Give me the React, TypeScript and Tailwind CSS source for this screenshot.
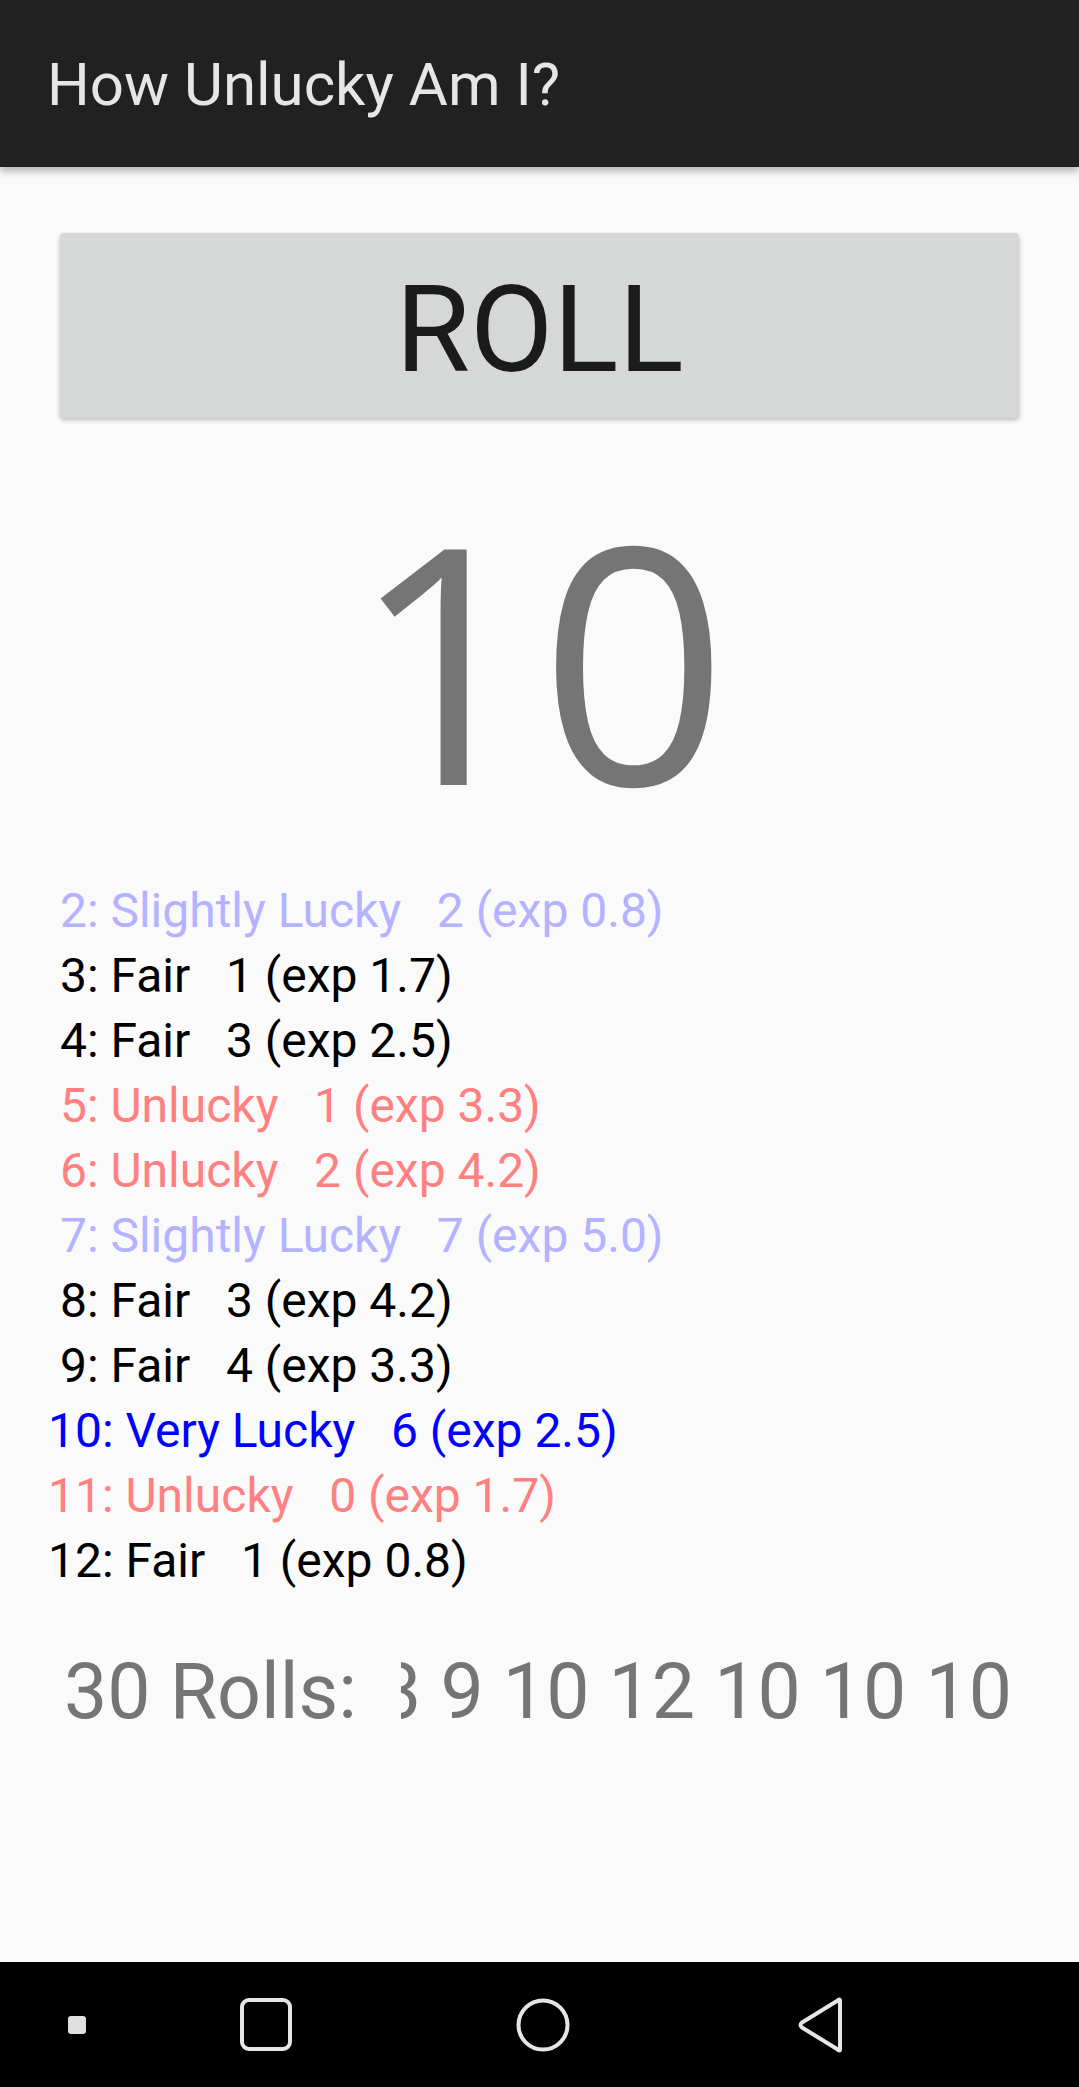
import React from "react";

const rows: { text: string; color: string; pad: boolean }[] = [
  { text: "2: Slightly Lucky   2 (exp 0.8)", color: "text-[#b3b3ff]", pad: true },
  { text: "3: Fair   1 (exp 1.7)", color: "text-black", pad: true },
  { text: "4: Fair   3 (exp 2.5)", color: "text-black", pad: true },
  { text: "5: Unlucky   1 (exp 3.3)", color: "text-[#ff8080]", pad: true },
  { text: "6: Unlucky   2 (exp 4.2)", color: "text-[#ff8080]", pad: true },
  { text: "7: Slightly Lucky   7 (exp 5.0)", color: "text-[#b3b3ff]", pad: true },
  { text: "8: Fair   3 (exp 4.2)", color: "text-black", pad: true },
  { text: "9: Fair   4 (exp 3.3)", color: "text-black", pad: true },
  { text: "10: Very Lucky   6 (exp 2.5)", color: "text-[#0000ff]", pad: false },
  { text: "11: Unlucky   0 (exp 1.7)", color: "text-[#ff8080]", pad: false },
  { text: "12: Fair   1 (exp 0.8)", color: "text-black", pad: false },
];

const rolls = "7 4 8 2 7 9 6 10 7 5 4 7 8 9 2 7 6 10 4 7 8 9 7 3 9 10 12 10 10 10";

export default function App() {
  return (
    <div className="w-full h-[2087px] bg-[#fafafa] flex flex-col overflow-hidden" style={{ fontFamily: "Roboto, 'Liberation Sans', sans-serif" }}>
      <div className="h-[167px] shrink-0 bg-[#212121] flex items-center pl-[47px] shadow-[0_4px_8px_rgba(0,0,0,0.3)] relative z-10">
        <span className="text-[60px] text-[#e6e6e6] leading-none pt-[3px]">How Unlucky Am I?</span>
      </div>

      <div className="px-[60px] pt-[66px]">
        <div className="h-[185px] w-full bg-[#d6d7d7] rounded-[4px] shadow-[0_2px_4px_rgba(0,0,0,0.25)] flex items-center justify-center">
          <span className="text-[121px] leading-none text-[#1b1b1b] pt-[10px]">ROLL</span>
        </div>
      </div>

      <div className="mt-[74px] flex justify-center">
        <span className="text-[330px] leading-none text-[#757575]" style={{ fontFamily: "'Open Sans', sans-serif" }}>10</span>
      </div>

      <div className="mt-[56px] flex flex-col pl-[48px]">
        {rows.map((r, i) => (
          <div key={i} className={`h-[65px] leading-[65px] text-[48px] whitespace-pre ${r.color}`}>
            {r.pad ? " " + r.text : r.text}
          </div>
        ))}
      </div>

      <div className="mt-[49px] flex items-center pl-[64px] pr-[67px] text-[77px] leading-[100px] text-[#757575]">
        <span className="shrink-0">30 Rolls:</span>
        <div className="ml-[44px] flex-1 overflow-hidden flex justify-end">
          <span className="whitespace-pre shrink-0">{rolls}</span>
        </div>
      </div>

      <div className="mt-auto h-[125px] shrink-0 bg-black flex items-center">
        <div className="ml-[68px] w-[18px] h-[18px] rounded-[3px] bg-[#e0e0e0]" />
        <svg className="ml-[154px]" width="52" height="53" viewBox="0 0 52 53">
          <rect x="2" y="2" width="48" height="49" rx="7" fill="none" stroke="#e6e6e6" strokeWidth="4" />
        </svg>
        <svg className="ml-[224px]" width="54" height="54" viewBox="0 0 54 54">
          <circle cx="27" cy="27" r="24.5" fill="none" stroke="#e6e6e6" strokeWidth="4" />
        </svg>
        <svg className="ml-[226px]" width="50" height="56" viewBox="0 0 50 56">
          <path d="M44 4 L44 52 Q44 55 41 52 L6 30.5 Q3 28 6 25.5 L41 4 Q44 1 44 4 Z" fill="none" stroke="#e6e6e6" strokeWidth="4" strokeLinejoin="round" />
        </svg>
      </div>
    </div>
  );
}
